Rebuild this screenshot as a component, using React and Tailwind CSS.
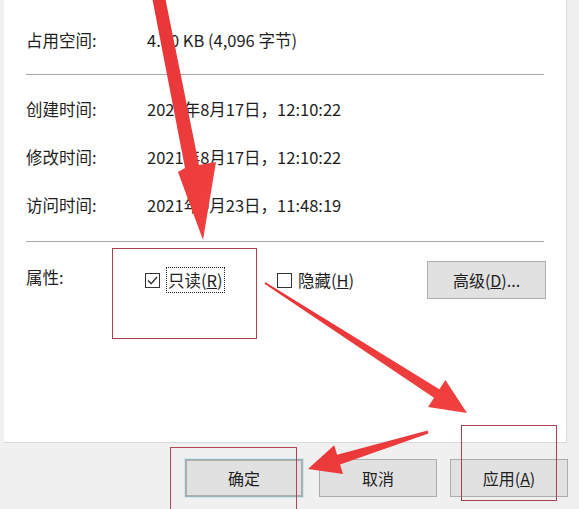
import React from 'react';

// one label/value line of the properties sheet
const InfoRow = ({ label, value, className = 'h-[48px]' }) => (
  <div className={`flex items-center ${className}`}>
    <span className="w-[121px] shrink-0">{label}</span>
    <span>{value}</span>
  </div>
);

const Sep = ({ className }) => <div className={`h-px bg-[#a9a9a9] ${className}`} />;

const CheckBox = ({ checked }) => (
  <span className="w-[15px] h-[15px] shrink-0 border border-[#333] bg-white flex items-center justify-center">
    {checked && (
      <svg width="13" height="13" viewBox="0 0 13 13">
        <path d="M2 6.5 L5.2 9.6 L11 3" fill="none" stroke="#222" strokeWidth="1.3" />
      </svg>
    )}
  </span>
);

const Btn = ({ children, className = '' }) => (
  <button className={`w-[118px] h-[38px] shrink-0 bg-[#e1e1e1] border border-[#adadad] flex items-center justify-center text-[16px] text-[#1e1e1e] ${className}`}>
    {children}
  </button>
);

export default function App() {
  return (
    <div className="relative w-[579px] h-[509px] overflow-hidden bg-[#f0f0f0] font-['Noto_Sans_CJK_SC','Noto_Sans',sans-serif] text-[16.5px] leading-none text-[#1e1e1e]">
      {/* white property page */}
      <div className="ml-[4px] w-[563px] h-[443px] bg-white border-r border-b border-[#dadada] px-[22px] overflow-hidden">
        <InfoRow label="大小:" value="4.00 KB (4,096 字节)" className="h-[52px] -mt-[36px] text-[#b0b0b0]" />
        <InfoRow label="占用空间:" value="4.00 KB (4,096 字节)" />
        <Sep className="mt-[10px]" />
        <div className="mt-[10px]">
          <InfoRow label="创建时间:" value="2021年8月17日，12:10:22" />
          <InfoRow label="修改时间:" value="2021年8月17日，12:10:22" />
          <InfoRow label="访问时间:" value="2021年9月23日，11:48:19" />
        </div>
        <Sep className="mt-[12px]" />

        {/* attributes */}
        <div className="mt-[19px] h-[38px] flex items-center">
          <span className="w-[119px] shrink-0 pb-[6px]">属性:</span>
          <div className="w-[132px] shrink-0 flex items-center gap-[6px]">
            <CheckBox checked />
            <span className="border border-dotted border-[#222] px-[1px] py-[4px]">
              只读(<span className="underline">R</span>)
            </span>
          </div>
          <div className="flex items-center gap-[6px]">
            <CheckBox />
            <span>
              隐藏(<span className="underline">H</span>)
            </span>
          </div>
          <Btn className="ml-auto -mr-[2px] w-[119px]">
            高级(<span className="underline">D</span>)...
          </Btn>
        </div>
      </div>

      {/* dialog buttons */}
      <div className="flex pt-[16px] pl-[185px]">
        <Btn className="border-2 border-[#23688a] shadow-[0_0_0_1px_#c4ecf6]">确定</Btn>
        <Btn className="ml-[16px]">取消</Btn>
        <Btn className="ml-[13px]">
          应用(<span className="underline">A</span>)
        </Btn>
      </div>

      {/* annotation boxes */}
      <div className="absolute left-[112px] top-[248px] w-[145px] h-[91px] border border-[#a9404f]" />
      <div className="absolute left-[170px] top-[447px] w-[127px] h-[70px] border border-[#b04555]" />
      <div className="absolute left-[461px] top-[425px] w-[96px] h-[76px] border border-[#a9404f]" />

      {/* annotation arrows */}
      <svg className="absolute inset-0 pointer-events-none" width="579" height="509" viewBox="0 0 579 509">
        <defs>
          <linearGradient id="red" x1="0" y1="0" x2="1" y2="1">
            <stop offset="0" stopColor="#e83538" />
            <stop offset="1" stopColor="#f0403f" />
          </linearGradient>
        </defs>
        <polygon
          fill="url(#red)"
          points="152,-3 185,168 178,172 203,240 216,162 199,165 165,-3"
        />
        <polygon
          fill="url(#red)"
          points="264.5,283.8 434,397.7 428,407 467,413 445.4,380 439.4,389.3 265.5,282.2"
        />
        <polygon
          fill="url(#red)"
          points="427.6,430.6 337.1,454.8 334.2,445.3 308,469 343,473.9 340.1,464.4 428.4,433.4"
        />
      </svg>
    </div>
  );
}
